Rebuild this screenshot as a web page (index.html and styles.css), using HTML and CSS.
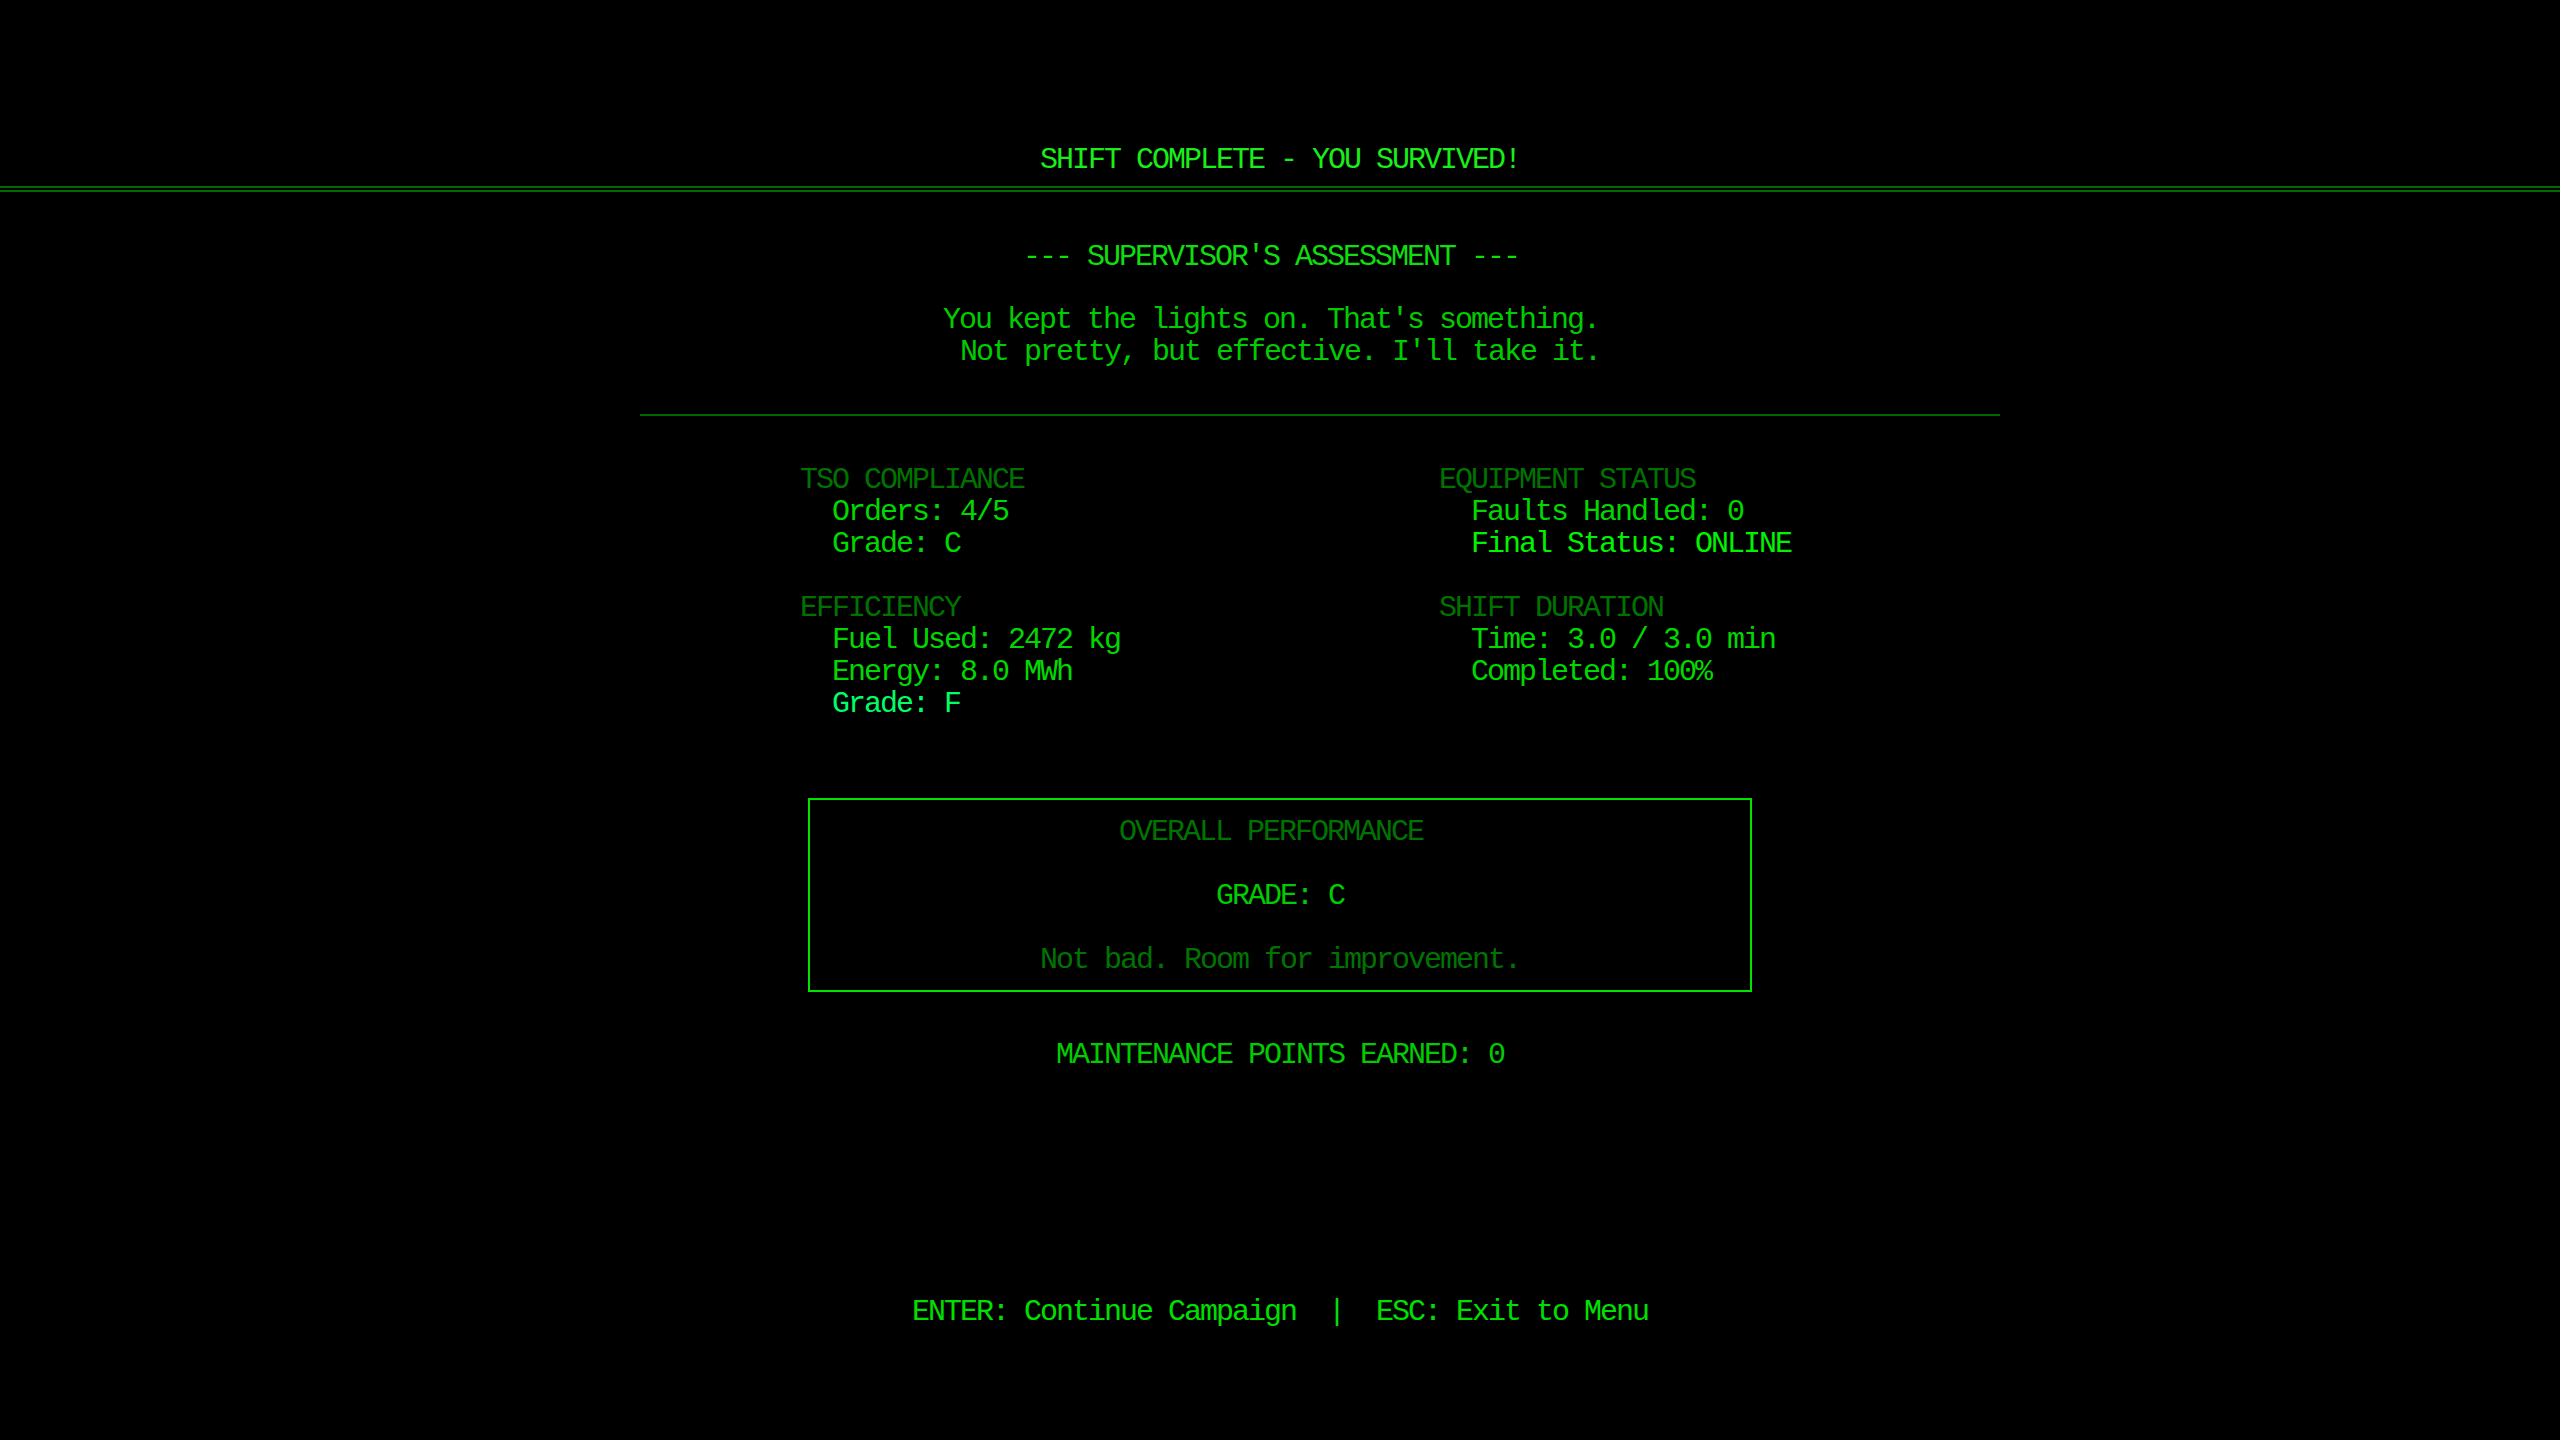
FILE: index.html
```html
<!DOCTYPE html>
<html>
<head>
<meta charset="utf-8">
<title>Shift Complete</title>
<link rel="stylesheet" href="styles.css">
</head>
<body>
<div class="screen">
  <header class="header">
    <div class="title">SHIFT COMPLETE - YOU SURVIVED!</div>
  </header>

  <section class="assessment">
    <div class="assess-title trail">--- SUPERVISOR'S ASSESSMENT ---</div>
    <div class="assess-msg">
      <div class="trail">You kept the lights on. That's something.</div>
      <div>Not pretty, but effective. I'll take it.</div>
    </div>
  </section>

  <div class="separator"></div>

  <section class="stats">
    <div class="col">
      <div class="group">
        <div class="group-title">TSO COMPLIANCE</div>
        <div class="item">Orders: 4/5</div>
        <div class="item">Grade: C</div>
      </div>
      <div class="group">
        <div class="group-title">EFFICIENCY</div>
        <div class="item">Fuel Used: 2472 kg</div>
        <div class="item">Energy: 8.0 MWh</div>
        <div class="item grade-f">Grade: F</div>
      </div>
    </div>
    <div class="col">
      <div class="group">
        <div class="group-title">EQUIPMENT STATUS</div>
        <div class="item">Faults Handled: 0</div>
        <div class="item bright">Final Status: ONLINE</div>
      </div>
      <div class="group">
        <div class="group-title">SHIFT DURATION</div>
        <div class="item">Time: 3.0 / 3.0 min</div>
        <div class="item">Completed: 100%</div>
      </div>
    </div>
  </section>

  <section class="overall">
    <div class="overall-title trail">OVERALL PERFORMANCE</div>
    <div class="overall-grade">GRADE: C</div>
    <div class="overall-msg">Not bad. Room for improvement.</div>
  </section>

  <div class="points">MAINTENANCE POINTS EARNED: 0</div>

  <footer class="footer">ENTER: Continue Campaign&nbsp;&nbsp;|&nbsp;&nbsp;ESC: Exit to Menu</footer>
</div>
</body>
</html>
```

FILE: styles.css
```css
html, body {
  margin: 0;
  padding: 0;
  background: #000;
}

body {
  width: 2560px;
  height: 1440px;
  overflow: hidden;
  font-family: "Liberation Mono", "DejaVu Sans Mono", monospace;
  font-size: 30px;
  letter-spacing: -2px;
  line-height: 32px;
  color: #00d400;
}

.screen {
  display: flex;
  flex-direction: column;
}

.header {
  padding-top: 144px;
  padding-bottom: 10px;
  border-bottom: 6px double #006a00;
  text-align: center;
}

.title {
  color: #1aee1a;
}

.trail {
  padding-right: 18px;
}

.assessment {
  margin-top: 49px;
  text-align: center;
}

.assess-title {
  color: #10dd10;
}

.assess-msg {
  margin-top: 31px;
  color: #00cc00;
}

.separator {
  margin-top: 46px;
  margin-left: 640px;
  width: 1360px;
  height: 2px;
  background: #006a00;
}

.stats {
  margin-top: 48px;
  margin-left: 800px;
  display: grid;
  grid-template-columns: 639px 640px;
}

.col {
  display: flex;
  flex-direction: column;
  gap: 32px;
}

.group-title {
  color: #007200;
}

.item {
  padding-left: 32px;
  color: #00d800;
}

.item.bright {
  color: #00f400;
}

.item.grade-f {
  color: #00ff66;
}

.overall {
  margin: 78px auto 0;
  width: 940px;
  border: 2px solid #00e400;
  padding: 16px 0 14px;
  display: flex;
  flex-direction: column;
  gap: 32px;
  text-align: center;
}

.overall-title {
  color: #007400;
}

.overall-grade {
  color: #00cc00;
}

.overall-msg {
  color: #007400;
}

.points {
  margin-top: 47px;
  text-align: center;
  color: #00cc00;
}

.footer {
  margin-top: 225px;
  text-align: center;
  color: #00e000;
}
```
